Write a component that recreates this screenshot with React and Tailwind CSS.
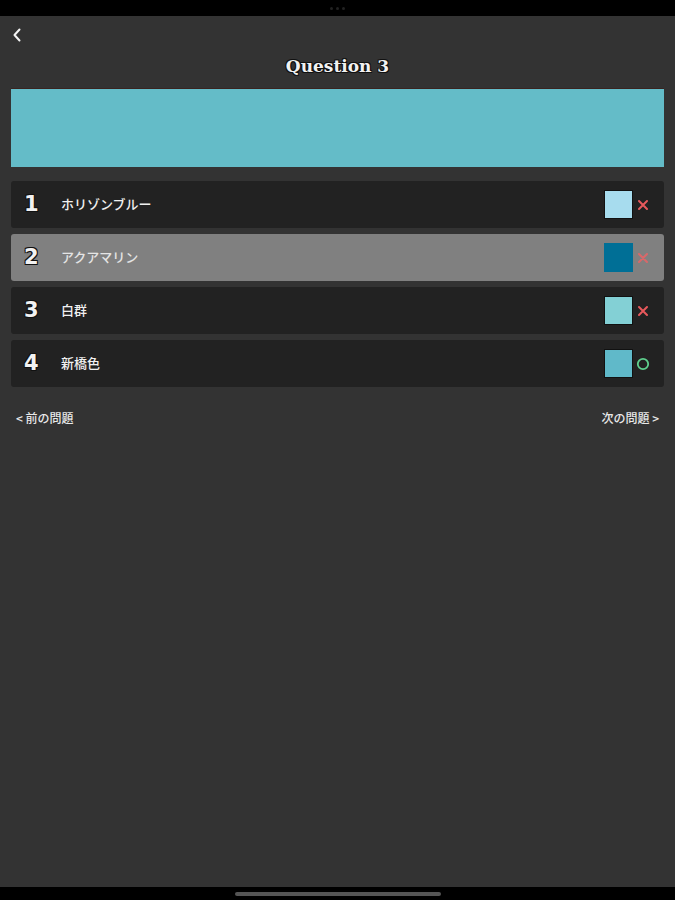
import React from 'react';

const choices = [
  { no: 1, name: 'ホリゾンブルー', color: '#a7dcee', ok: false },
  { no: 2, name: 'アクアマリン', color: '#006f96', ok: false, picked: true },
  { no: 3, name: '白群', color: '#83d0d5', ok: false },
  { no: 4, name: '新橋色', color: '#60b9c9', ok: true },
];

const jp = { fontFamily: '"Noto Sans CJK JP", "Noto Sans", sans-serif' };

const Mark = ({ ok, faded }) =>
  ok ? (
    <svg width="14" height="14" viewBox="0 0 14 14">
      <circle cx="7" cy="7" r="5.2" fill="none" stroke="#5fd08e" strokeWidth="1.8" />
    </svg>
  ) : (
    <svg width="14" height="14" viewBox="0 0 14 14">
      <path d="M3 3 L11 11 M11 3 L3 11" stroke={faded ? '#d9686a' : '#e8595c'} strokeWidth="2" strokeLinecap="round" />
    </svg>
  );

const Row = ({ item }) => (
  <div
    className={`flex items-center h-[47px] rounded-[3px] pl-[13px] pr-[14px] ${
      item.picked ? 'bg-[#808080]' : 'bg-[#222222]'
    }`}
  >
    <span
      className="w-[37px] text-[21px] font-bold text-[#f2f2f2] [text-shadow:1px_1px_0_#111,-1px_-1px_0_#111,1px_-1px_0_#111,-1px_1px_0_#111]"
      style={{ fontFamily: '"DejaVu Sans", sans-serif' }}
    >
      {item.no}
    </span>
    <span className={`flex-1 text-[13px] font-medium pb-[1px] ${item.picked ? 'text-[#e4e4e4]' : 'text-[#f0f0f0]'}`} style={jp}>
      {item.name}
    </span>
    <div
      className={`w-[29px] h-[29px] border ${item.picked ? 'border-transparent' : 'border-[#111]'}`}
      style={{ backgroundColor: item.color }}
    />
    <div className="ml-[3px] w-[14px] flex justify-center">
      <Mark ok={item.ok} faded={item.picked} />
    </div>
  </div>
);

export default function App() {
  return (
    <div className="w-[675px] h-[900px] flex flex-col bg-black">
      <div className="h-[16px] flex items-center justify-center gap-[3px] shrink-0">
        <span className="w-[3px] h-[3px] rounded-full bg-[#222]" />
        <span className="w-[3px] h-[3px] rounded-full bg-[#222]" />
        <span className="w-[3px] h-[3px] rounded-full bg-[#222]" />
      </div>
      <div className="flex-1 bg-[#333333] px-[11px] flex flex-col">
        <div className="h-[36px] flex items-center pl-[1px] pt-[2px]">
          <svg width="10" height="14" viewBox="0 0 10 14">
            <path d="M7.5 1.5 L2.5 7 L7.5 12.5" fill="none" stroke="#f4f4f4" strokeWidth="2" strokeLinecap="round" strokeLinejoin="round" />
          </svg>
        </div>
        <h1
          className="h-[29px] mb-[7px] flex items-center justify-center text-[17px] font-bold text-[#f2f2f2] [text-shadow:1px_1px_0_#111,-1px_-1px_0_#111,1px_-1px_0_#111,-1px_1px_0_#111]"
          style={{ fontFamily: '"DejaVu Serif", serif' }}
        >
          Question 3
        </h1>
        <div className="h-[79px] bg-[#64bcc8] border-t border-[#3a2420]" />
        <div className="mt-[14px] flex flex-col gap-[6px]">
          {choices.map((c) => (
            <Row key={c.no} item={c} />
          ))}
        </div>
        <div className="mt-[22px] flex justify-between px-[5px] text-[12px] font-medium text-[#e8e8e8]" style={jp}>
          <span>&lt; 前の問題</span>
          <span>次の問題 &gt;</span>
        </div>
      </div>
      <div className="h-[13px] flex items-center justify-center shrink-0">
        <div className="w-[206px] h-[4px] rounded-full bg-[#555555]" />
      </div>
    </div>
  );
}
